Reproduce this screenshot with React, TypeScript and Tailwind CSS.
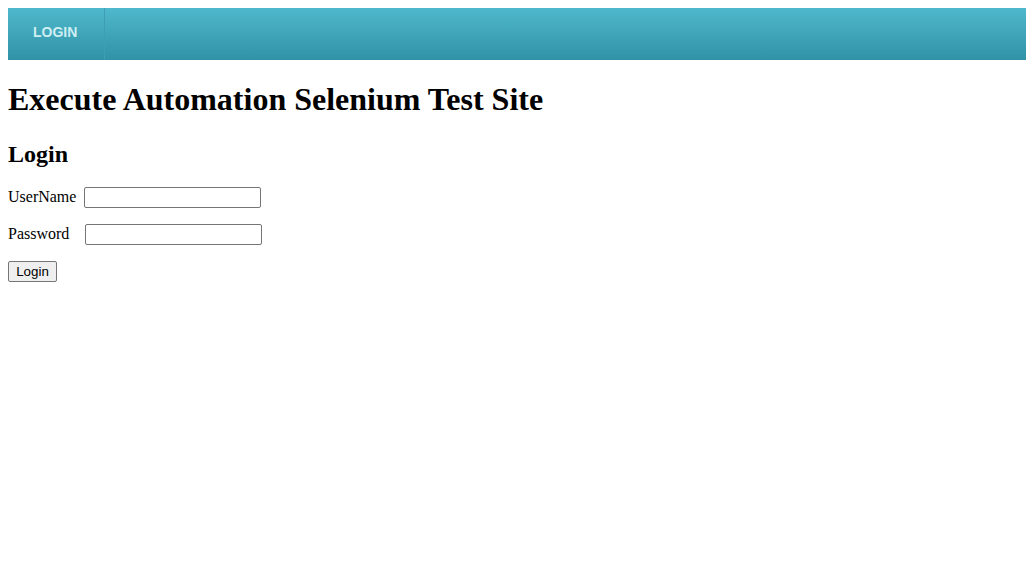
export default function App() {
  return (
    <div className="p-2 bg-white min-h-screen" style={{ fontFamily: '"Liberation Serif", "Times New Roman", serif' }}>
      {/* Top menu */}
      <nav className="flex h-[52px] bg-gradient-to-b from-[#4fb8cc] to-[#3192a6]">
        <a
          href="#"
          className="flex items-center pl-[25px] pr-[27px] pb-[3px] border-r border-[#3f9fb2] text-[14px] font-bold text-[#cdeff2] font-['Liberation_Sans',Arial,sans-serif]"
        >
          LOGIN
        </a>
      </nav>

      <h1 className="my-[21.44px] text-[32px] leading-[37px] font-bold text-black">
        Execute Automation Selenium Test Site
      </h1>

      <h2 className="mt-[19.92px] mb-[19px] text-[24px] leading-[28px] font-bold text-black">Login</h2>

      <form className="text-[16px] text-black">
        <div className="flex items-center h-[21px] mb-4">
          <label className="w-[76px]">UserName</label>
          <input
            type="text"
            name="UserName"
            className="w-[177px] h-[21px] border border-[#767676] rounded-[2px] px-[2px] text-[13.33px] font-['Liberation_Sans',Arial,sans-serif]"
          />
        </div>
        <div className="flex items-center h-[21px] mb-4">
          <label className="w-[77px]">Password</label>
          <input
            type="password"
            name="Password"
            className="w-[177px] h-[21px] border border-[#767676] rounded-[2px] px-[2px] text-[13.33px] font-['Liberation_Sans',Arial,sans-serif]"
          />
        </div>
        <button
          type="button"
          className="block w-[49px] h-[21px] bg-[#efefef] border border-[#767676] rounded-[2px] text-[13.33px] leading-none text-black font-['Liberation_Sans',Arial,sans-serif]"
        >
          Login
        </button>
      </form>
    </div>
  );
}
